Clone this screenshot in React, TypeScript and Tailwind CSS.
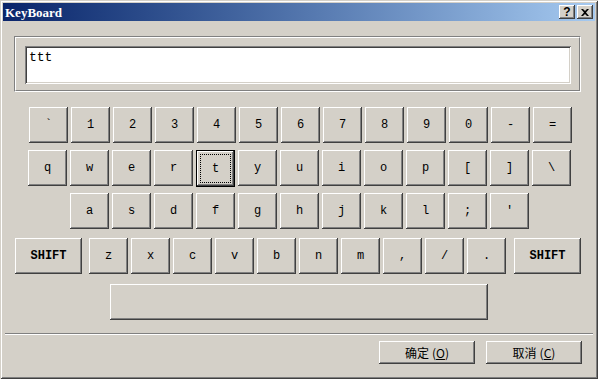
const raised =
  'bg-[#d4d0c8] shadow-[inset_-1px_-1px_#404040,inset_1px_1px_#ffffff,inset_-2px_-2px_#808080,inset_2px_2px_#d4d0c8]';

const row1 = ['`', '1', '2', '3', '4', '5', '6', '7', '8', '9', '0', '-', '='];
const row2 = ['q', 'w', 'e', 'r', 't', 'y', 'u', 'i', 'o', 'p', '[', ']', '\\'];
const row3 = ['a', 's', 'd', 'f', 'g', 'h', 'j', 'k', 'l', ';', "'"];
const row4 = ['z', 'x', 'c', 'v', 'b', 'n', 'm', ',', '/', '.'];

function Key({ label, focused }: { label: string; focused?: boolean }) {
  if (focused) {
    return (
      <div className="w-[39px] h-[37px] border border-black bg-[#d4d0c8] flex">
        <div className={`flex-1 flex items-center justify-center p-[3px] ${raised}`}>
          <div className="w-full h-full border border-dotted border-black flex items-center justify-center text-[12px] text-black">
            {label}
          </div>
        </div>
      </div>
    );
  }
  return (
    <div className={`w-[39px] h-[36px] flex items-center justify-center text-[12px] text-black ${raised}`}>
      {label}
    </div>
  );
}

function ShiftKey() {
  return (
    <div className={`w-[67px] h-[36px] flex items-center justify-center text-[12px] font-bold text-black ${raised}`}>
      SHIFT
    </div>
  );
}

export default function App() {
  return (
    <div
      className="w-[598px] h-[379px] bg-[#d4d0c8] p-[3px] flex flex-col shadow-[inset_1px_1px_#d4d0c8,inset_-1px_-1px_#404040,inset_2px_2px_#ffffff,inset_-2px_-2px_#808080]"
      style={{ fontFamily: '"Liberation Mono", monospace' }}
    >
      {/* Title bar */}
      <div className="h-[18px] bg-gradient-to-r from-[#0a246a] to-[#a6caf0] flex items-center pl-[2px] pr-[2px]">
        <span
          className="text-white font-bold text-[13px] leading-none"
          style={{ fontFamily: '"Liberation Serif", serif' }}
        >
          KeyBoard
        </span>
        <div className="ml-auto flex gap-[2px]">
          <div className={`w-[16px] h-[14px] flex items-center justify-center text-[12px] font-bold text-black leading-none ${raised}`}
            style={{ fontFamily: '"Liberation Sans", sans-serif' }}>
            ?
          </div>
          <div className={`w-[16px] h-[14px] flex items-center justify-center ${raised}`}>
            <svg width="8" height="7" viewBox="0 0 8 7">
              <path d="M0 0h2l2 2 2-2h2L5 3.5 8 7H6L4 5 2 7H0l3-3.5z" fill="#000" />
            </svg>
          </div>
        </div>
      </div>

      {/* Input group */}
      <div className="mt-[15px] ml-[11px] w-[567px] h-[56px] border border-t-[#808080] border-l-[#808080] border-b-white border-r-white">
        <div className="w-full h-full border border-t-white border-l-white border-b-[#808080] border-r-[#808080] pl-[9px] pt-[8px]">
          <div className="w-[546px] h-[38px] bg-white shadow-[inset_1px_1px_#808080,inset_-1px_-1px_#ffffff,inset_2px_2px_#404040,inset_-2px_-2px_#d4d0c8] pl-[4px] pt-[4px] text-[13px] text-black leading-[15px]">
            ttt
          </div>
        </div>
      </div>

      {/* Keyboard */}
      <div className="mt-[15px] ml-[26px] flex gap-[3px]">
        {row1.map((k) => (
          <Key key={k} label={k} />
        ))}
      </div>
      <div className="mt-[7px] ml-[25px] flex gap-[3px] items-start">
        {row2.map((k) => (
          <Key key={k} label={k} focused={k === 't'} />
        ))}
      </div>
      <div className="mt-[6px] ml-[67px] flex gap-[3px]">
        {row3.map((k) => (
          <Key key={k} label={k} />
        ))}
      </div>
      <div className="mt-[9px] ml-[12px] flex">
        <ShiftKey />
        <div className="ml-[7px] mr-[8px] flex gap-[3px]">
          {row4.map((k) => (
            <Key key={k} label={k} />
          ))}
        </div>
        <ShiftKey />
      </div>
      <div className="mt-[10px] ml-[107px]">
        <div className={`w-[378px] h-[36px] ${raised}`} />
      </div>

      {/* Separator */}
      <div className="mt-[13px] ml-[2px] w-[588px] h-[2px] border-t border-t-[#808080] border-b border-b-white" />

      {/* Dialog buttons */}
      <div
        className="mt-[6px] ml-[376px] flex gap-[11px]"
        style={{ fontFamily: '"Noto Sans CJK SC", "Liberation Sans", sans-serif' }}
      >
        <div className={`w-[96px] h-[23px] flex items-center justify-center text-[12px] text-black ${raised}`}>
          确定<span className="ml-[3px]">(<span className="underline">O</span>)</span>
        </div>
        <div className={`w-[96px] h-[23px] flex items-center justify-center text-[12px] text-black ${raised}`}>
          取消<span className="ml-[3px]">(<span className="underline">C</span>)</span>
        </div>
      </div>
    </div>
  );
}
